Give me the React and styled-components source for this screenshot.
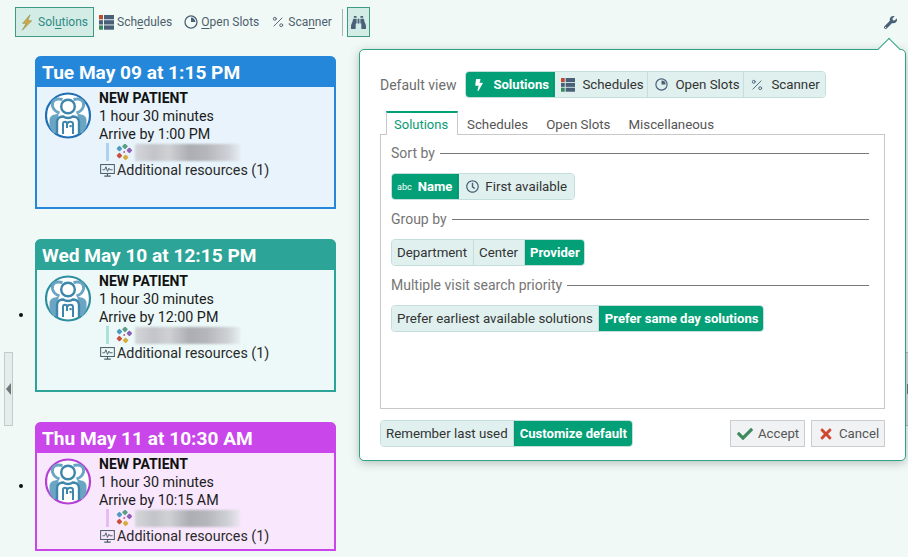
import React from 'react'
import styled, { createGlobalStyle } from 'styled-components'
import { FaBinoculars, FaBolt, FaCheck, FaRegClock, FaTimes, FaWrench } from 'react-icons/fa'
import { Percent } from 'lucide-react'

const GlobalStyle = createGlobalStyle`
  html, body {
    margin: 0;
    padding: 0;
    height: 100%;
  }
  body {
    background: #f1f9f6;
    font-family: Roboto, "Liberation Sans", sans-serif;
    color: #222;
    overflow: hidden;
  }
`

const Page = styled.div`
  position: relative;
  width: 908px;
  height: 557px;
  overflow: hidden;
`

const Toolbar = styled.div`
  display: flex;
  align-items: center;
  height: 30px;
  padding: 7px 10px 0 15px;
`

const ToolButton = styled.div`
  display: flex;
  align-items: center;
  gap: ${(p) => (p.$active ? '5px' : '3px')};
  box-sizing: border-box;
  height: 30px;
  padding: 0 ${(p) => (p.$active ? '5px' : '0')} 0 ${(p) => (p.$active ? '5px' : '0')};
  margin-right: ${(p) => p.$gap || 0}px;
  font-size: 12px;
  color: ${(p) => (p.$active ? '#2e8b86' : '#4d5f6e')};
  background: ${(p) => (p.$active ? '#d3ece5' : 'transparent')};
  border: ${(p) => (p.$active ? '1px solid #3f9a83' : '0')};
  u { text-underline-offset: 2px; }
`

const ToolDivider = styled.div`
  width: 1px;
  height: 27px;
  margin: 0 4px 0 10px;
  background: #a9b3b2;
`

const SearchButton = styled.div`
  display: flex;
  align-items: center;
  justify-content: center;
  box-sizing: border-box;
  width: 23px;
  height: 30px;
  background: #d3ece5;
  border: 1px solid #3f9a83;
  color: #4a6078;
  font-size: 15px;
`

const WrenchButton = styled.div`
  margin-left: auto;
  margin-right: 1px;
  color: #4a6078;
  font-size: 13px;
  display: flex;
`

const CardList = styled.ul`
  list-style: none;
  margin: 19px 0 0 35px;
  padding: 0;
  display: flex;
  flex-direction: column;
  gap: 30px;
  width: 301px;
`

const CardItem = styled.li`
  position: relative;
  &::before {
    content: ${(p) => (p.$dot ? '""' : 'none')};
    position: absolute;
    left: -16px;
    top: ${(p) => p.$dot}px;
    width: 4px;
    height: 4px;
    border-radius: 50%;
    background: #111;
  }
`

const Card = styled.article`
  box-sizing: border-box;
  height: ${(p) => p.$height}px;
  background: ${(p) => p.$tint};
  border: 2px solid ${(p) => p.$color};
  border-top: 0;
  border-radius: 6px 6px 0 0;
`

const CardHead = styled.header`
  margin: 0 -2px;
  height: 31px;
  padding-left: 7px;
  background: ${(p) => p.$color};
  border-radius: 6px 6px 0 0;
  color: #fff;
  font-size: 19.1px;
  font-weight: 700;
  line-height: 33px;
`

const CardBody = styled.div`
  display: flex;
  padding: 2px 0 0 8px;
`

const Avatar = styled.svg`
  flex: none;
  width: 47px;
  height: 47px;
  margin: 3px 7px 0 0;
`

const Details = styled.div`
  font-size: 14.3px;
  line-height: 18px;
  color: #1c1c1c;
`

const VisitName = styled.div`
  font-weight: 700;
  font-size: 14px;
  color: #111;
`

const ProviderRow = styled.div`
  display: flex;
  align-items: center;
  height: 18px;
  margin-left: 7px;
  padding-left: 7px;
  border-left: 3px solid ${(p) => p.$color};
`

const BlurredName = styled.div`
  width: 105px;
  height: 17px;
  margin-left: 2px;
  background: linear-gradient(90deg, #d4d6da 0%, #c2c4c9 18%, #cfd1d5 32%, #acaeb4 52%, #b4b6bb 68%, #cdd0d4 88%, rgba(225, 228, 232, 0.5) 100%);
  filter: blur(1px);
`

const ResourceRow = styled.div`
  display: flex;
  align-items: center;
  gap: 2px;
  padding-left: 1px;
  color: #2a2a2a;
`

const LeftSplitter = styled.div`
  position: absolute;
  left: 4px;
  top: 352px;
  box-sizing: border-box;
  width: 9px;
  height: 74px;
  background: #e6eceb;
  border: 1px solid #c4c9c9;
  display: flex;
  align-items: center;
  &::after {
    content: '';
    border-style: solid;
    border-width: 6px 5px 6px 0;
    border-color: transparent #6e7677 transparent transparent;
    margin-left: 1px;
  }
`

const RightSplitter = styled.div`
  position: absolute;
  left: 906px;
  top: 352px;
  box-sizing: border-box;
  width: 2px;
  height: 74px;
  background: #d9dede;
  border-top: 1px solid #b4baba;
  border-bottom: 1px solid #b4baba;
  display: flex;
  align-items: center;
  &::after {
    content: '';
    width: 1px;
    height: 10px;
    margin-left: 1px;
    background: #6e7677;
  }
`

const Popover = styled.section`
  position: absolute;
  left: 359px;
  top: 49px;
  box-sizing: border-box;
  width: 547px;
  height: 412px;
  padding: 21px 20px 0;
  background: #fff;
  border: 1px solid #2fa383;
  border-radius: 5px;
  box-shadow: 0 2px 10px rgba(40, 60, 55, 0.3);
`

const Arrow = styled.div`
  position: absolute;
  right: 8px;
  top: -9px;
  width: 15px;
  height: 15px;
  background: #fff;
  border-left: 1px solid #2fa383;
  border-top: 1px solid #2fa383;
  transform: rotate(45deg);
`

const ViewRow = styled.div`
  display: flex;
  align-items: center;
  gap: 9px;
`

const Label = styled.span`
  font-size: 14px;
  color: #6d6d6d;
`

const Segments = styled.div`
  display: inline-flex;
  height: 27px;
  box-sizing: border-box;
  border-radius: 4px;
  overflow: hidden;
  border: 1px solid #c3dedb;
`

const Segment = styled.div`
  display: flex;
  align-items: center;
  gap: ${(p) => p.$gap || 0}px;
  box-sizing: border-box;
  width: ${(p) => (p.$width ? `${p.$width}px` : 'auto')};
  padding: 0 ${(p) => (p.$width ? 0 : p.$pad || 5.5)}px 0 ${(p) => p.$pad || 5.5}px;
  margin: -1px 0;
  font-size: ${(p) => (p.$on ? '13.1px' : '13.3px')};
  white-space: nowrap;
  color: ${(p) => (p.$on ? '#fff' : '#333')};
  font-weight: ${(p) => (p.$on ? 700 : 400)};
  background: ${(p) => (p.$on ? '#03a077' : '#dff0ee')};
  border-right: 1px solid ${(p) => (p.$on ? '#03a077' : '#c3dedb')};
  box-shadow: ${(p) => (p.$on ? 'inset 0 0 0 1px #0a9370' : 'none')};
  svg { flex: none; }
  &:first-child {
    margin-left: ${(p) => (p.$on ? '-1px' : '0')};
    padding-left: ${(p) => (p.$on ? (p.$pad || 6) : 5)}px;
  }
  &:last-child {
    margin-right: ${(p) => (p.$on ? '-1px' : '0')};
    border-right: 0;
  }
`

const SegmentIcon = styled.span`
  display: flex;
  font-size: ${(p) => p.$size || 13}px;
  color: ${(p) => (p.$on ? '#fff' : '#4a6078')};
`

const AbcMark = styled.span`
  font-size: 9px;
  font-weight: 400;
`

const Tabs = styled.div`
  display: flex;
  margin: 13px 0 0 6px;
  height: 24px;
  position: relative;
  z-index: 1;
`

const Tab = styled.div`
  box-sizing: border-box;
  height: 24px;
  padding: ${(p) => (p.$on ? '4px 7px 0' : '6px 9px 0')};
  font-size: ${(p) => (p.$on ? '13px' : '13.3px')};
  color: ${(p) => (p.$on ? '#0a9a74' : '#555')};
  background: ${(p) => (p.$on ? '#fff' : 'transparent')};
  border: ${(p) => (p.$on ? '1px solid #c8c8c8' : '0')};
  border-top: ${(p) => (p.$on ? '2px solid #03a077' : '0')};
  border-bottom: 0;
  min-width: ${(p) => (p.$on ? '72px' : '0')};
`

const TabPane = styled.div`
  box-sizing: border-box;
  height: 275px;
  margin-top: -1px;
  padding: 8px 15px 0 10px;
  border: 1px solid #c8c8c8;
`

const Fieldset = styled.div`
  margin-bottom: 9px;
`

const Legend = styled.div`
  display: flex;
  align-items: center;
  gap: 5px;
  height: 20px;
  margin-bottom: 10px;
  font-size: 14px;
  color: #757575;
  &::after {
    content: '';
    flex: 1;
    height: 1px;
    background: #777;
  }
`

const Footer = styled.div`
  display: flex;
  align-items: center;
  justify-content: space-between;
  margin-top: 11px;
`

const Actions = styled.div`
  display: flex;
  gap: 6px;
`

const ActionButton = styled.div`
  display: flex;
  align-items: center;
  gap: 5px;
  box-sizing: border-box;
  width: ${(p) => p.$width}px;
  height: 27px;
  padding-left: 6px;
  font-size: 13.2px;
  color: #555;
  background: #f0f2f3;
  border: 1px solid #c9cdcf;
`

const ActionIcon = styled.span`
  display: flex;
  font-size: 16px;
  color: ${(p) => p.$color};
`

const ScheduleIcon = ({ size = 15 }) => (
  <svg width={size} height={size} viewBox="0 0 15 15">
    <rect x="0" y="0" width="4" height="4.3" fill="#c0492f" />
    <rect x="0" y="5.2" width="4" height="4.3" fill="#4a6078" />
    <rect x="0" y="10.4" width="4" height="4.3" fill="#37895e" />
    <rect x="5" y="0" width="10" height="4.3" fill="#4a6078" />
    <rect x="5" y="5.2" width="10" height="4.3" fill="#4a6078" />
    <rect x="5" y="10.4" width="10" height="4.3" fill="#4a6078" />
  </svg>
)

const PieIcon = ({ size = 13 }) => (
  <svg width={size} height={size} viewBox="0 0 13 13">
    <circle cx="6.5" cy="6.5" r="5.6" fill="none" stroke="#4a6078" strokeWidth="1.2" />
    <path d="M6.5 6.5V2.4A4.1 4.1 0 0 1 10.6 6.5Z" fill="#4a6078" />
  </svg>
)

const BoltIcon = () => (
  <svg width="12" height="17" viewBox="0 0 14 19">
    <path d="M10.5 0.5 L2 10.5 L6 10.5 L1.5 18.5 L12.5 7.5 L8 7.5 Z" fill="#d0ab3d" stroke="#8f8a5c" strokeWidth="0.7" />
  </svg>
)

const MonitorIcon = () => (
  <svg width="15" height="13" viewBox="0 0 16 14" fill="none" stroke="#4a5d68">
    <rect x="0.6" y="0.6" width="14.8" height="9.6" strokeWidth="1.1" />
    <path d="M2.5 6.2H5L6.3 3L8 8L9.5 4.5L10.5 6.2H13.5" strokeWidth="1" />
    <path d="M8 10.5V12.5M4.5 13H11.5" strokeWidth="1.2" />
  </svg>
)

const PracticeLogo = () => (
  <svg width="17" height="17" viewBox="0 0 17 17">
    <rect x="1.2" y="2.4" width="4.4" height="4.4" rx="1" transform="rotate(45 3.4 4.6)" fill="#4b9cc0" />
    <rect x="6.8" y="0.2" width="4.4" height="4.4" rx="1" transform="rotate(45 9 2.4)" fill="#5c9d86" />
    <rect x="11.2" y="4.2" width="4.4" height="4.4" rx="1" transform="rotate(45 13.4 6.4)" fill="#8d5fb5" />
    <rect x="1.2" y="9.4" width="4.4" height="4.4" rx="1" transform="rotate(45 3.4 11.6)" fill="#c9503f" />
    <rect x="7.4" y="11.2" width="4.4" height="4.4" rx="1" transform="rotate(45 9.6 13.4)" fill="#d5ad3a" />
    <circle cx="8.2" cy="8" r="1" fill="#c65a8c" />
  </svg>
)

const PeopleAvatar = ({ ring }) => (
  <Avatar viewBox="0 0 47 47">
    <circle cx="23" cy="23.5" r="22" fill="#fff" stroke={ring} strokeWidth="2.2" />
    <g fill="none" stroke="#6ba5c4" strokeWidth="3">
      <path d="M17.5 7.5C10.5 5.5 6.5 9 7.5 14C8.5 18 11.5 20 14.5 21" />
      <path d="M28.5 7.5C35.5 5.5 39.5 9 38.5 14C37.5 18 34.5 20 31.5 21" />
    </g>
    <path d="M4.5 35V28C4.5 24 8.5 22 13.5 22V41H8.5Z" fill="#6ba5c4" />
    <path d="M41.5 35V28C41.5 24 37.5 22 32.5 22V41H37.5Z" fill="#6ba5c4" />
    <circle cx="23" cy="14.5" r="6.8" fill="#fff" stroke="#3f86ad" strokeWidth="2.4" />
    <path d="M12 42V30C12 26 15.5 24.5 18.5 24.5C20.5 26.5 25.5 26.5 27.5 24.5C30.5 24.5 34 26 34 30V42" fill="#fff" />
    <path d="M12 42V30C12 26 15.5 24.5 18.5 24.5C20.5 26.5 25.5 26.5 27.5 24.5C30.5 24.5 34 26 34 30V42" fill="none" stroke="#3f86ad" strokeWidth="2.4" />
    <path d="M18 42V32C18 29 22 29 22 32V36M22.5 32C22.5 29 28 29 28 32V42" fill="none" stroke="#3f86ad" strokeWidth="2" />
    <rect x="24.5" y="33" width="2.2" height="2.2" fill="#3f86ad" />
  </Avatar>
)

const cards = [
  { id: 1, when: 'Tue May 09 at 1:15 PM', arrive: '1:00 PM', color: '#2487d9', tint: '#e8f3fb', ring: '#1f6fb5', rule: '#aed2ee', height: 153 },
  { id: 2, when: 'Wed May 10 at 12:15 PM', arrive: '12:00 PM', color: '#2da498', tint: '#ecf9f8', ring: '#2f8fa0', rule: '#aee0da', height: 153, dot: 74 },
  { id: 3, when: 'Thu May 11 at 10:30 AM', arrive: '10:15 AM', color: '#c946ea', tint: '#f9e7fd', ring: '#b33fd4', rule: '#e6bdf2', height: 129, dot: 62 },
]

const AppointmentCard = ({ card }) => (
  <CardItem $dot={card.dot}>
    <Card $height={card.height} $color={card.color} $tint={card.tint}>
      <CardHead $color={card.color}>{card.when}</CardHead>
      <CardBody>
        <PeopleAvatar ring={card.ring} />
        <Details>
          <VisitName>NEW PATIENT</VisitName>
          <div>1 hour 30 minutes</div>
          <div>Arrive by {card.arrive}</div>
          <ProviderRow $color={card.rule}>
            <PracticeLogo />
            <BlurredName />
          </ProviderRow>
          <ResourceRow>
            <MonitorIcon />
            Additional resources (1)
          </ResourceRow>
        </Details>
      </CardBody>
    </Card>
  </CardItem>
)

const App = () => (
  <Page>
    <GlobalStyle />
    <Toolbar>
      <ToolButton $active $gap={5}>
        <BoltIcon />
        <span>Sol<u>u</u>tions</span>
      </ToolButton>
      <ToolButton $gap={12}>
        <ScheduleIcon />
        <span>Sch<u>e</u>dules</span>
      </ToolButton>
      <ToolButton $gap={12}>
        <PieIcon size={14} />
        <span><u>O</u>pen Slots</span>
      </ToolButton>
      <ToolButton>
        <Percent size={14} strokeWidth={1.6} />
        <span>Sca<u>n</u>ner</span>
      </ToolButton>
      <ToolDivider />
      <SearchButton>
        <FaBinoculars />
      </SearchButton>
      <WrenchButton>
        <FaWrench />
      </WrenchButton>
    </Toolbar>

    <CardList>
      {cards.map((card) => (
        <AppointmentCard key={card.id} card={card} />
      ))}
    </CardList>

    <LeftSplitter />
    <RightSplitter />

    <Popover>
      <Arrow />
      <ViewRow>
        <Label>Default view</Label>
        <Segments>
          <Segment $on $width={90} $gap={8} $pad={8}>
            <SegmentIcon $on $size={12}><FaBolt /></SegmentIcon>
            Solutions
          </Segment>
          <Segment $width={93} $gap={7} $pad={6}>
            <ScheduleIcon size={14} />
            Schedules
          </Segment>
          <Segment $width={96} $gap={7} $pad={7}>
            <PieIcon />
            Open Slots
          </Segment>
          <Segment $width={81} $gap={7} $pad={6}>
            <Percent size={14} strokeWidth={1.6} color="#4a6078" />
            Scanner
          </Segment>
        </Segments>
      </ViewRow>

      <Tabs>
        <Tab $on>Solutions</Tab>
        <Tab>Schedules</Tab>
        <Tab>Open Slots</Tab>
        <Tab>Miscellaneous</Tab>
      </Tabs>
      <TabPane>
        <Fieldset>
          <Legend>Sort by</Legend>
          <Segments>
            <Segment $on $gap={6} $pad={6}>
              <AbcMark>abc</AbcMark>
              Name
            </Segment>
            <Segment $gap={6} $pad={7}>
              <SegmentIcon><FaRegClock /></SegmentIcon>
              First available
            </Segment>
          </Segments>
        </Fieldset>
        <Fieldset>
          <Legend>Group by</Legend>
          <Segments>
            <Segment>Department</Segment>
            <Segment>Center</Segment>
            <Segment $on>Provider</Segment>
          </Segments>
        </Fieldset>
        <Fieldset>
          <Legend>Multiple visit search priority</Legend>
          <Segments>
            <Segment>Prefer earliest available solutions</Segment>
            <Segment $on>Prefer same day solutions</Segment>
          </Segments>
        </Fieldset>
      </TabPane>

      <Footer>
        <Segments>
          <Segment>Remember last used</Segment>
          <Segment $on>Customize default</Segment>
        </Segments>
        <Actions>
          <ActionButton $width={75}>
            <ActionIcon $color="#3d8a5f"><FaCheck /></ActionIcon>
            Accept
          </ActionButton>
          <ActionButton $width={74}>
            <ActionIcon $color="#d2472f"><FaTimes /></ActionIcon>
            Cancel
          </ActionButton>
        </Actions>
      </Footer>
    </Popover>
  </Page>
)

export default App
